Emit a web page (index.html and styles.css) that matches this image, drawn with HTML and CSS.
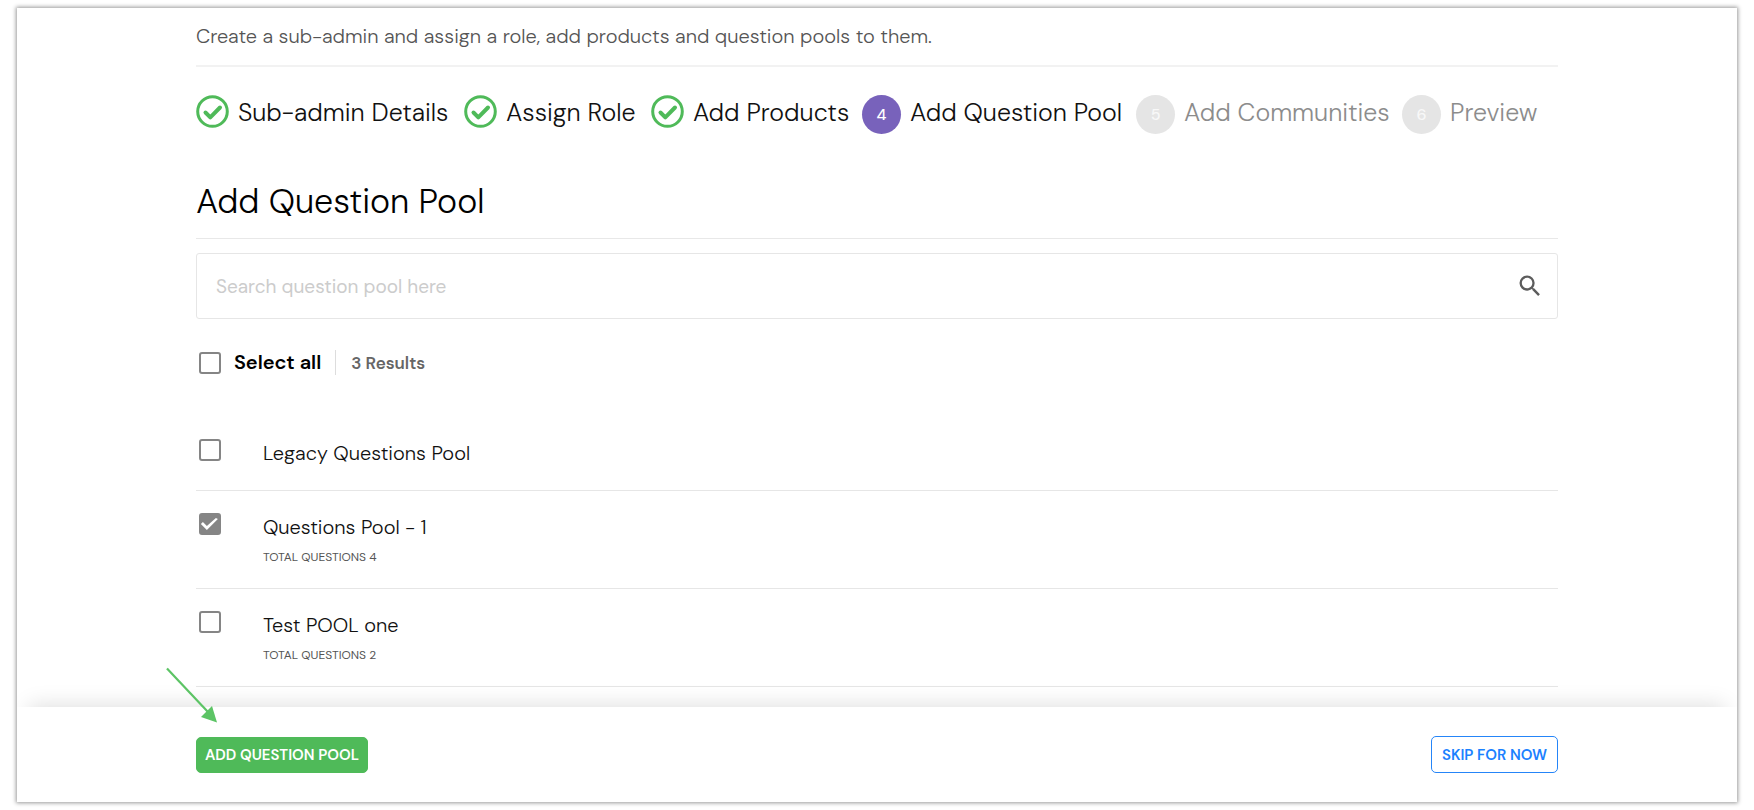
FILE: index.html
```html
<!DOCTYPE html>
<html lang="en">
<head>
<meta charset="UTF-8">
<meta name="viewport" content="width=device-width, initial-scale=1.0">
<title>Add Question Pool</title>
<link rel="stylesheet" href="styles.css">
</head>
<body>
<div class="panel">
<main class="content">
<p class="intro">Create a sub-admin and assign a role, add products and question pools to them.</p>

<ol class="steps">
<li class="step">
<svg class="step-check" viewBox="0 0 33 33"><circle cx="16.5" cy="16.5" r="14.8"/><path d="M9.5 17.5l4.8 4.8 9.7-9.8"/></svg>
<span>Sub-admin Details</span>
</li>
<li class="step">
<svg class="step-check" viewBox="0 0 33 33"><circle cx="16.5" cy="16.5" r="14.8"/><path d="M9.5 17.5l4.8 4.8 9.7-9.8"/></svg>
<span>Assign Role</span>
</li>
<li class="step">
<svg class="step-check" viewBox="0 0 33 33"><circle cx="16.5" cy="16.5" r="14.8"/><path d="M9.5 17.5l4.8 4.8 9.7-9.8"/></svg>
<span>Add Products</span>
</li>
<li class="step current"><span class="step-number">4</span><span>Add Question Pool</span></li>
<li class="step upcoming"><span class="step-number">5</span><span>Add Communities</span></li>
<li class="step upcoming"><span class="step-number">6</span><span>Preview</span></li>
</ol>

<h1>Add Question Pool</h1>

<form class="search">
<input type="text" class="search-input" placeholder="Search question pool here" aria-label="Search question pool">
<button type="button" class="search-button" aria-label="Search">
<svg viewBox="0 0 24 24"><path d="M15.5 14h-.79l-.28-.27A6.47 6.47 0 0 0 16 9.5 6.5 6.5 0 1 0 9.5 16c1.61 0 3.09-.59 4.23-1.57l.27.28v.79l5 4.99L20.49 19l-4.99-5zm-6 0C7.01 14 5 11.99 5 9.5S7.01 5 9.5 5 14 7.01 14 9.5 11.99 14 9.5 14z"/></svg>
</button>
</form>

<div class="toolbar">
<input type="checkbox" id="selectAll">
<label for="selectAll" class="select-all">Select all</label>
<span class="results">3 Results</span>
</div>

<ul class="pools">
<li class="pool">
<input type="checkbox" id="pool1">
<label for="pool1">Legacy Questions Pool</label>
</li>
<li class="pool">
<input type="checkbox" id="pool2" checked>
<label for="pool2">Questions Pool - 1<small>TOTAL QUESTIONS 4</small></label>
</li>
<li class="pool">
<input type="checkbox" id="pool3">
<label for="pool3">Test POOL one<small>TOTAL QUESTIONS 2</small></label>
</li>
</ul>
</main>

<footer class="footer">
<div class="add-wrap">
<svg class="arrow" viewBox="0 0 52 56"><path class="arrow-line" d="M1 1.500L42 45"/><path class="arrow-head" d="M51 55.500L35 50 46 39z"/></svg>
<button type="button" class="btn btn-add">ADD QUESTION POOL</button>
</div>
<button type="button" class="btn btn-skip">SKIP FOR NOW</button>
</footer>
</div>
</body>
</html>
```
FILE: styles.css
```css
* {
box-sizing: border-box;
}

body {
margin: 0;
padding: 8px 17px;
background-color: #fff;
color: #111;
font-family: "DM Sans", Inter, sans-serif;
}

.panel {
display: flex;
flex-direction: column;
min-height: calc(100vh - 16px);
box-shadow: 0 0 4px 1px #999;
}

.content {
padding: 14px 10.4% 20px;
}

.intro {
margin: 0;
padding-bottom: 14px;
border-bottom: 2px solid #f2f2f2;
color: #555;
font-size: 20px;
font-weight: 300;
line-height: 29px;
}

.steps {
display: grid;
grid-template-columns: 268fr 187fr 211fr 274fr 266fr 156fr;
margin: 0;
padding: 28px 0 0;
list-style: none;
font-size: 25px;
font-weight: 300;
line-height: 35px;
white-space: nowrap;
}

.step {
display: flex;
align-items: flex-start;
gap: 9px;
}

.step-check {
flex: none;
width: 33px;
height: 33px;
fill: none;
stroke: #4fba59;
stroke-width: 3;
}

.step-check path {
stroke-width: 4;
stroke-linecap: round;
stroke-linejoin: round;
}

.step-number {
flex: none;
width: 39px;
border-radius: 50%;
background-color: #7862bb;
color: #fff;
font-size: 16px;
font-weight: 500;
line-height: 39px;
text-align: center;
}

.upcoming {
color: #8c8c8c;
}

.upcoming .step-number {
background-color: #e5e5e5;
color: #f8f8f8;
}

h1 {
margin: 0 0 14px;
padding: 46px 0 14px;
border-bottom: 1px solid #e8e8e8;
color: #000;
font-size: 34px;
font-weight: 300;
line-height: 44px;
}

.search {
display: flex;
align-items: center;
height: 66px;
padding: 0 13px 0 19px;
border: 1px solid #e6e6e6;
border-radius: 3px;
}

.search-input {
flex: 1;
border: 0;
outline: 0;
background: none;
padding: 0;
font: inherit;
font-size: 19px;
}

.search-input::placeholder {
color: #ccc;
}

.search-button {
width: 28px;
height: 28px;
padding: 0;
border: 0;
background: none;
}

.search-button svg {
display: block;
fill: #5c5c5c;
}

.toolbar {
display: flex;
align-items: center;
padding: 31px 3px;
}

input[type="checkbox"] {
flex: none;
appearance: none;
width: 22px;
height: 22px;
margin: 0;
border: 2px solid #858585;
border-radius: 3px;
}

input[type="checkbox"]:checked {
background-color: #858585;
}

input[type="checkbox"]:checked::before {
content: "";
display: block;
width: 18px;
height: 18px;
background-color: #fff;
clip-path: polygon(0 9px, 2px 7px, 6px 11px, 15px 3px, 17px 4px, 6px 15px);
}

.select-all {
padding: 0 14px 0 13px;
border-right: 1px solid #ddd;
color: #000;
font-size: 20px;
font-weight: 600;
line-height: 25px;
}

.results {
padding-left: 15px;
color: #666;
font-size: 17px;
font-weight: 600;
}

.pools {
margin: 0;
padding: 11px 0 0;
list-style: none;
}

.pool {
display: flex;
align-items: flex-start;
gap: 42px;
padding: 22px 3px;
border-bottom: 1px solid #e6e6e6;
}

.pool label {
color: #111;
font-size: 20px;
font-weight: 300;
line-height: 29px;
}

.pool small {
display: block;
padding-top: 6px;
color: #555;
font-size: 12px;
font-weight: 400;
line-height: 18px;
}

.footer {
display: flex;
flex: 1;
align-items: center;
justify-content: space-between;
padding: 29px 10.4%;
background-color: #fff;
box-shadow: 0 -14px 20px -12px rgba(0, 0, 0, .13);
clip-path: inset(-60px 0 0);
}

.add-wrap {
position: relative;
}

/* pointer to the add button */
.arrow {
position: absolute;
top: -70px;
left: -30px;
width: 52px;
height: 56px;
}

.arrow-line {
stroke: #5cc465;
stroke-width: 2.2;
}

.arrow-head {
fill: #5cc465;
}

.btn {
display: block;
height: 37px;
padding: 0 8px;
border: 1px solid #2585f8;
border-radius: 5px;
font-family: inherit;
font-size: 15px;
font-weight: 600;
}

.btn-add {
height: 36px;
border-color: #4fba59;
background-color: #4fba59;
color: #fff;
}

.btn-skip {
padding: 0 10px;
background-color: #fff;
color: #1b81ff;
}
```
